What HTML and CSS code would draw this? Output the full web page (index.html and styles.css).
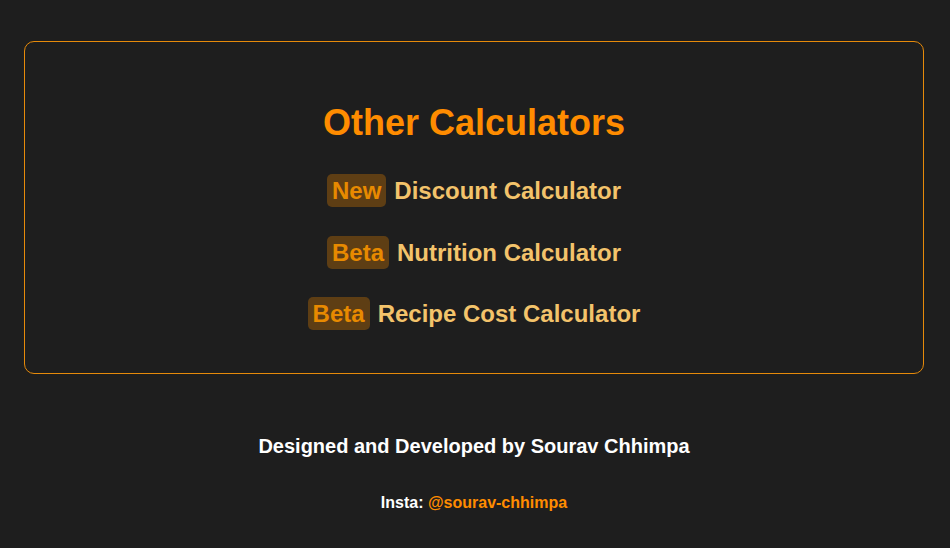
FILE: index.html
```html
<!DOCTYPE html>
<html lang="en">
<head>
<meta charset="utf-8">
<title>Other Calculators</title>
<link rel="stylesheet" href="styles.css">
</head>
<body>
<main class="page">
  <section class="card">
    <h2 class="card-title">Other Calculators</h2>
    <ul class="calc-list">
      <li class="calc-item"><span class="badge">New</span><a class="calc-link" href="#">Discount Calculator</a></li>
      <li class="calc-item"><span class="badge">Beta</span><a class="calc-link" href="#">Nutrition Calculator</a></li>
      <li class="calc-item"><span class="badge">Beta</span><a class="calc-link" href="#">Recipe Cost Calculator</a></li>
    </ul>
  </section>
  <footer class="footer">
    <p class="credit">Designed and Developed by Sourav Chhimpa</p>
    <p class="insta">Insta: <a class="insta-link" href="#">@sourav-chhimpa</a></p>
  </footer>
</main>
</body>
</html>
```
FILE: styles.css
```css
* { box-sizing: border-box; }
html, body {
  margin: 0;
  padding: 0;
  background: #1e1e1e;
  font-family: "Liberation Sans", Arial, sans-serif;
}
.page {
  width: 900px;
  margin: 0 0 0 24px;
  padding-top: 41px;
}
.card {
  border: 1px solid #e68a0a;
  border-radius: 10px;
  padding: 30px 20px 43px;
  text-align: center;
}
.card-title {
  margin: 30px 0 31px;
  font-size: 36px;
  line-height: 41px;
  font-weight: bold;
  color: #ff8c00;
}
.calc-list {
  list-style: none;
  margin: 0;
  padding: 0;
  display: flex;
  flex-direction: column;
  align-items: center;
  gap: 28.5px;
}
.calc-item {
  display: flex;
  align-items: center;
  gap: 8px;
  font-size: 24px;
  font-weight: bold;
  line-height: 27px;
}
.badge {
  background: #5e3e14;
  color: #e88a00;
  border-radius: 5px;
  padding: 3px 5px;
}
.calc-link {
  color: #f3c36b;
  text-decoration: none;
}
.footer {
  text-align: center;
  color: #ffffff;
  font-weight: bold;
}
.credit {
  margin: 61px 0 0;
  font-size: 20px;
  line-height: 23px;
}
.insta {
  margin: 36px 0 0;
  font-size: 16px;
  line-height: 18px;
}
.insta-link {
  color: #ff8c00;
  text-decoration: none;
}
```
